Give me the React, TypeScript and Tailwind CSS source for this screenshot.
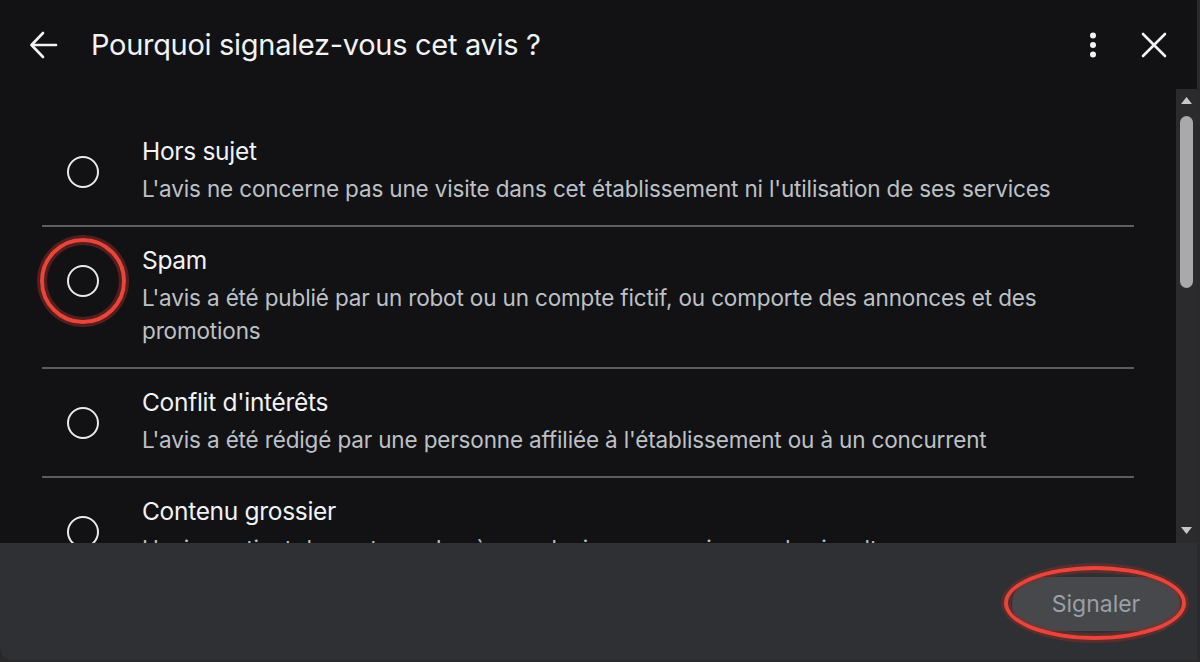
import React from "react";

const reasons = [
  {
    title: "Hors sujet",
    desc: "L'avis ne concerne pas une visite dans cet établissement ni l'utilisation de ses services",
  },
  {
    title: "Spam",
    desc: "L'avis a été publié par un robot ou un compte fictif, ou comporte des annonces et des promotions",
    marked: true,
  },
  {
    title: "Conflit d'intérêts",
    desc: "L'avis a été rédigé par une personne affiliée à l'établissement ou à un concurrent",
  },
  {
    title: "Contenu grossier",
    desc: "L'avis contient du contenu obscène, vulgaire ou grossier, ou des insultes",
  },
];

const ReasonRow = ({ title, desc, marked }: { title: string; desc: string; marked?: boolean }) => (
  <div className="flex border-b-2 border-[#5b5d61] pt-[18px] pb-[20px]">
    <div className="w-[100px] shrink-0 pt-[20px] pl-[25px]">
      <div className="relative w-[32px] h-[32px]">
        <div className="w-[32px] h-[32px] rounded-full border-2 border-[#e8eaed]" />
        {marked && (
          <div className="absolute left-[-27px] top-[-27px] w-[86px] h-[86px] rounded-full border-[4px] border-[#e8453c] shadow-[0_0_0_3px_rgba(140,40,36,0.55),inset_0_0_0_3px_rgba(140,40,36,0.55)]" />
        )}
      </div>
    </div>
    <div className="flex-1 pr-[40px]">
      <p className="text-[24.5px] leading-[30px] text-[#f1f3f4] tracking-[-0.3px]">{title}</p>
      <p className="mt-[6px] text-[22.5px] leading-[33px] text-[#bdc1c6] tracking-[-0.15px]">{desc}</p>
    </div>
  </div>
);

export default function App() {
  return (
    <div
      className="w-[1200px] h-[662px] bg-[#2a2a2c] flex overflow-hidden"
      style={{ fontFamily: "Inter, Roboto, 'Liberation Sans', sans-serif" }}
    >
      <div className="w-[1197px] h-[660px] bg-[#121214] flex flex-col rounded-bl-[10px] overflow-hidden">
        {/* header */}
        <div className="h-[89px] shrink-0 flex items-center pl-[29px] pr-[30px]">
          <svg width="30" height="30" viewBox="0 0 30 30" fill="none" stroke="#f1f3f4" strokeWidth="2.6" strokeLinecap="round" strokeLinejoin="round">
            <path d="M27 15H3" />
            <path d="M14 3L2.5 15L14 27" />
          </svg>
          <h1 className="ml-[32px] text-[29px] text-[#f1f3f4] tracking-[-0.3px]">Pourquoi signalez-vous cet avis ?</h1>
          <div className="ml-auto flex items-center gap-[44px]">
            <svg width="8" height="26" viewBox="0 0 8 26" fill="#f1f3f4">
              <circle cx="4" cy="3.5" r="3" />
              <circle cx="4" cy="13" r="3" />
              <circle cx="4" cy="22.5" r="3" />
            </svg>
            <svg width="26" height="26" viewBox="0 0 26 26" stroke="#f1f3f4" strokeWidth="2.6" strokeLinecap="round">
              <path d="M2 2L24 24M24 2L2 24" />
            </svg>
          </div>
        </div>

        {/* list */}
        <div className="flex-1 flex min-h-0">
          <div className="flex-1 overflow-hidden pl-[42px] pr-[42px] pt-[29px]">
            {reasons.map((r) => (
              <ReasonRow key={r.title} {...r} />
            ))}
          </div>
          <div className="w-[21px] shrink-0 bg-[#2b2b2d] flex flex-col items-center pt-[7px] pb-[8px]">
            <svg width="13" height="9" viewBox="0 0 13 9" fill="#c7c7c7">
              <path d="M6.5 1L12 8H1Z" />
            </svg>
            <div className="mt-[11px] w-[13px] h-[172px] rounded-full bg-[#a9a9ab]" />
            <div className="flex-1" />
            <svg width="13" height="9" viewBox="0 0 13 9" fill="#c7c7c7">
              <path d="M1 1H12L6.5 8Z" />
            </svg>
          </div>
        </div>

        {/* footer */}
        <div className="h-[117px] shrink-0 bg-[#2f3033] flex items-end justify-end pr-[17px] pb-[29px]">
          <div className="relative">
            <div className="absolute left-[-8px] right-[-6px] top-[-11px] bottom-[-9px] rounded-[50%] border-[4px] border-[#e8453c] shadow-[0_0_0_3px_rgba(140,40,36,0.5),inset_0_0_0_3px_rgba(140,40,36,0.5)]" />
            <button className="w-[168px] h-[54px] rounded-full bg-[#46484c] text-[23px] text-[#9aa0a6]">
              Signaler
            </button>
          </div>
        </div>
      </div>
    </div>
  );
}
